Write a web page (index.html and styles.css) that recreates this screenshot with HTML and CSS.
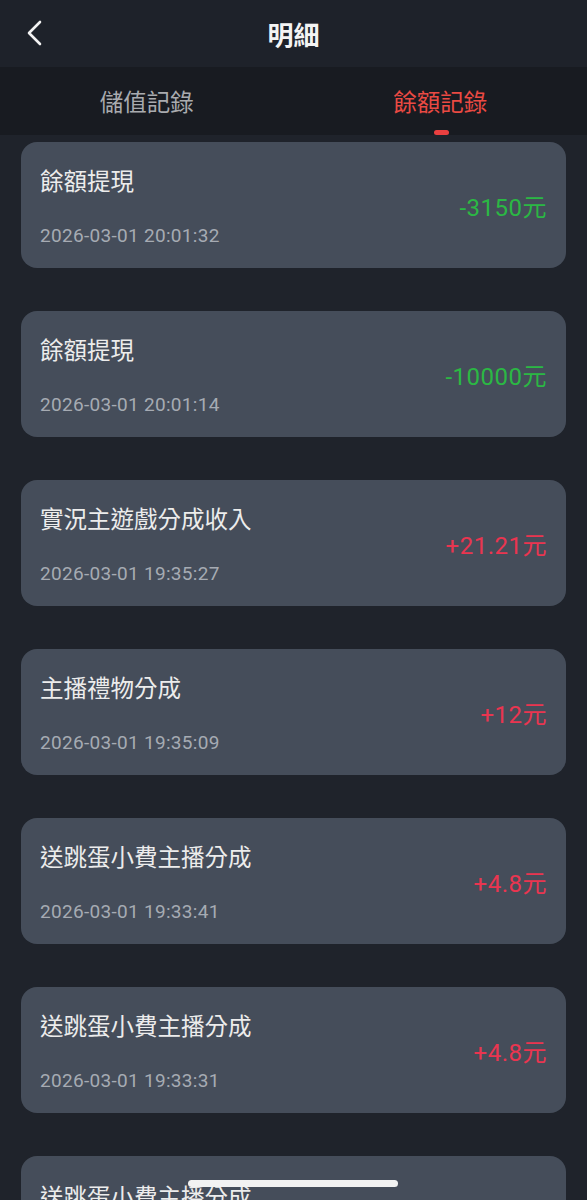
FILE: index.html
```html
<!DOCTYPE html>
<html>
<head>
	<title>明細</title>
	<meta name="viewport" content="width=device-width, initial-scale=1.0">
	<link rel="stylesheet" href="styles.css">
</head>
<body>
	<div class="header">
		<a class="back" href="#">
			<svg width="20" height="26" viewBox="0 0 20 26"><path d="M15 2 L4 13 L15 24" fill="none" stroke="#f2f2f2" stroke-width="2.6" stroke-linecap="round" stroke-linejoin="round"/></svg>
		</a>
		<h1>明細</h1>
	</div>
	<div class="tabs">
		<div class="tab">儲值記錄</div>
		<div class="tab active">餘額記錄</div>
	</div>
	<div class="list">
		<div class="item">
			<div class="info"><div class="name">餘額提現</div><div class="date">2026-03-01 20:01:32</div></div>
			<div class="amount out">-3150元</div>
		</div>
		<div class="item">
			<div class="info"><div class="name">餘額提現</div><div class="date">2026-03-01 20:01:14</div></div>
			<div class="amount out">-10000元</div>
		</div>
		<div class="item">
			<div class="info"><div class="name">實況主遊戲分成收入</div><div class="date">2026-03-01 19:35:27</div></div>
			<div class="amount in">+21.21元</div>
		</div>
		<div class="item">
			<div class="info"><div class="name">主播禮物分成</div><div class="date">2026-03-01 19:35:09</div></div>
			<div class="amount in">+12元</div>
		</div>
		<div class="item">
			<div class="info"><div class="name">送跳蛋小費主播分成</div><div class="date">2026-03-01 19:33:41</div></div>
			<div class="amount in">+4.8元</div>
		</div>
		<div class="item">
			<div class="info"><div class="name">送跳蛋小費主播分成</div><div class="date">2026-03-01 19:33:31</div></div>
			<div class="amount in">+4.8元</div>
		</div>
		<div class="item">
			<div class="info"><div class="name">送跳蛋小費主播分成</div></div>
		</div>
	</div>
	<div class="home-bar"></div>
</body>
</html>
```

FILE: styles.css
```css
body, html {
	margin: 0;
	height: 1200px;
	overflow: hidden;
	background-color: #1f232b;
	font-family: "Noto Sans CJK TC", "Noto Sans", sans-serif;
	color: #ececec;
}
.header {
	height: 67px;
	background-color: #1e222a;
	display: flex;
	align-items: center;
	justify-content: center;
	position: relative;
}
.header h1 {
	margin: 0;
	font-size: 26px;
	font-weight: 700;
	color: #f4f4f4;
}
.back {
	position: absolute;
	left: 25px;
	top: 20px;
	display: block;
}
.tabs {
	height: 68px;
	background-color: #181b21;
	display: flex;
}
.tab {
	flex: 1;
	text-align: center;
	font-size: 23.5px;
	line-height: 68px;
	color: #a9abaf;
	position: relative;
}
.tab.active { color: #ea4a43; }
.tab.active::after {
	content: "";
	position: absolute;
	left: 50%;
	margin-left: -6px;
	bottom: 0;
	width: 15px;
	height: 5px;
	border-radius: 3px;
	background-color: #ea4040;
}
.list {
	padding: 7px 21px 0 21px;
	display: flex;
	flex-direction: column;
	gap: 43px;
}
.item {
	height: 126px;
	box-sizing: border-box;
	background-color: #454d5a;
	border-radius: 16px;
	padding: 0 19px;
	display: flex;
	align-items: center;
	justify-content: space-between;
}
.item:last-child {
	align-items: flex-start;
	padding-top: 24px;
}
.info {
	padding-top: 2px;
}
.name {
	font-size: 23.5px;
	line-height: 28px;
	color: #ececec;
}
.date {
	margin-top: 31px;
	font-family: "Roboto", "Noto Sans", sans-serif;
	font-size: 19px;
	letter-spacing: 0.3px;
	line-height: 22px;
	color: #a6abb3;
}
.amount {
	font-family: "Roboto", "Noto Sans CJK TC", sans-serif;
	font-size: 24px;
	letter-spacing: 0.5px;
}
.amount.out { color: #2bb844; }
.amount.in { color: #ea3550; }
.home-bar {
	position: absolute;
	left: 188px;
	top: 1180px;
	width: 210px;
	height: 7px;
	border-radius: 4px;
	background-color: #f2f2f2;
}
```
